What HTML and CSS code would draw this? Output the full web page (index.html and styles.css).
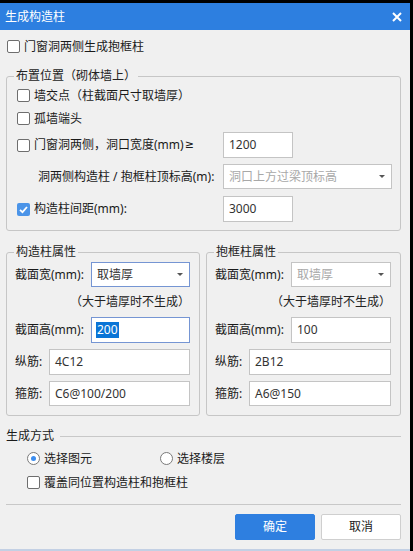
FILE: index.html
```html
<!DOCTYPE html>
<html lang="zh-CN">
<head>
    <meta charset="UTF-8">
    <meta name="viewport" content="width=device-width, initial-scale=1.0">
    <title>生成构造柱</title>
    <link rel="stylesheet" href="styles.css">
</head>
<body>

<div class="dialog">
    <div class="titlebar">
        <span class="title">生成构造柱</span>
        <svg class="close" width="10" height="10" viewBox="0 0 10 10">
            <path d="M1 1 L9 9 M9 1 L1 9" stroke="#fff" stroke-width="2" fill="none"/>
        </svg>
    </div>

    <div class="content">
        <div class="check top-check"><span class="box"></span>门窗洞两侧生成抱框柱</div>

        <!-- 布置位置 -->
        <fieldset class="group place">
            <legend>布置位置（砌体墙上）</legend>
            <div class="prow ra"><div class="check"><span class="box"></span>墙交点（柱截面尺寸取墙厚）</div></div>
            <div class="prow rb"><div class="check"><span class="box"></span>孤墙端头</div></div>
            <div class="prow rc">
                <div class="check"><span class="box"></span>门窗洞两侧，洞口宽度(mm)<span class="ge">≥</span></div>
                <div class="field short">1200</div>
            </div>
            <div class="prow rd">
                <div class="indent">洞两侧构造柱 / 抱框柱顶标高(m):</div>
                <div class="field select disabled">洞口上方过梁顶标高<span class="arrow"></span></div>
            </div>
            <div class="prow re">
                <div class="check"><span class="box checked"></span>构造柱间距(mm):</div>
                <div class="field short">3000</div>
            </div>
        </fieldset>

        <div class="columns">
            <fieldset class="group prop left">
                <legend>构造柱属性</legend>
                <div class="frow r1"><span class="lbl">截面宽(mm):</span><div class="field select focus">取墙厚<span class="arrow"></span></div></div>
                <div class="note">（大于墙厚时不生成）</div>
                <div class="frow r2"><span class="lbl">截面高(mm):</span><div class="field focus"><span class="sel">200</span></div></div>
                <div class="frow r3"><span class="lbl narrow">纵筋:</span><div class="field">4C12</div></div>
                <div class="frow r4"><span class="lbl narrow">箍筋:</span><div class="field">C6@100/200</div></div>
            </fieldset>
            <fieldset class="group prop right">
                <legend>抱框柱属性</legend>
                <div class="frow r1"><span class="lbl">截面宽(mm):</span><div class="field select disabled">取墙厚<span class="arrow"></span></div></div>
                <div class="note">（大于墙厚时不生成）</div>
                <div class="frow r2"><span class="lbl">截面高(mm):</span><div class="field">100</div></div>
                <div class="frow r3"><span class="lbl narrow">纵筋:</span><div class="field">2B12</div></div>
                <div class="frow r4"><span class="lbl narrow">箍筋:</span><div class="field">A6@150</div></div>
            </fieldset>
        </div>

        <div class="section-head"><span>生成方式</span><div class="line"></div></div>
        <div class="radios">
            <div class="radio first"><span class="dot checked"></span>选择图元</div>
            <div class="radio"><span class="dot"></span>选择楼层</div>
        </div>
        <div class="check cover"><span class="box"></span>覆盖同位置构造柱和抱框柱</div>

        <div class="divider"></div>

        <div class="buttons">
            <div class="btn primary">确定</div>
            <div class="btn">取消</div>
        </div>
    </div>
</div>

</body>
</html>
```

FILE: styles.css
```css
body {
    margin: 0;
    background: #000;
    font-family: "Noto Sans", "Noto Sans CJK SC", sans-serif;
    font-size: 12px;
    color: #1a1a1a;
}
.dialog {
    width: 410px;
    height: 546px;
    margin-top: 3px;
    background: #f0f0f0;
    border-bottom: 2px solid #c3d0e4;
    overflow: hidden;
}
.titlebar {
    height: 27px;
    background: #2d7fe0;
    display: flex;
    align-items: center;
    justify-content: space-between;
    padding: 0 8px 0 5px;
}
.title {
    color: #fff;
    font-size: 12px;
    line-height: 16px;
}
.close {
    display: block;
}
.content {
    padding: 0 9px 0 6px;
}

/* checkboxes / radios */
.check {
    display: flex;
    align-items: center;
    height: 19px;
    line-height: 16px;
    white-space: nowrap;
}
.box {
    width: 11px;
    height: 11px;
    border: 1px solid #6e6e6e;
    border-radius: 2px;
    background: #fff;
    margin-right: 4px;
    flex: none;
}
.box.checked {
    width: 13px;
    height: 13px;
    border: none;
    background: #4b94e8 url("data:image/svg+xml;utf8,<svg xmlns='http://www.w3.org/2000/svg' width='13' height='13'><path d='M3 6.8 L5.5 9.2 L10 4' stroke='white' stroke-width='1.8' fill='none'/></svg>") no-repeat center;
}
.top-check {
    margin-top: 7px;
    padding-left: 1px;
}
.ge {
    font-family: "DejaVu Sans", sans-serif;
    font-size: 11px;
    margin-left: 1px;
}

/* group boxes */
.group {
    margin: 0;
    padding: 0;
    border: 1px solid #c6c6c6;
    border-radius: 3px;
    min-width: 0;
}
.group legend {
    margin-left: 7px;
    padding: 0 2px;
    line-height: 16px;
    color: #222;
}
.place {
    margin-top: 12px;
    padding-bottom: 8px;
}
.prow {
    display: grid;
    grid-template-columns: 206px 1fr;
    align-items: center;
    padding: 0 8px 0 10px;
}
.prow.ra { margin-top: 2px; height: 19px; }
.prow.rb { margin-top: 4px; height: 19px; }
.prow.rc { margin-top: 4px; height: 26px; }
.prow.rd { margin-top: 6px; height: 25px; }
.prow.re { margin-top: 7px; height: 26px; }
.indent {
    padding-left: 21px;
    white-space: nowrap;
    line-height: 16px;
}

/* fields */
.field {
    position: relative;
    box-sizing: border-box;
    height: 26px;
    border: 1px solid #c4c4c4;
    background: #fff;
    padding-left: 5px;
    display: flex;
    align-items: center;
    color: #333;
    line-height: 16px;
    white-space: nowrap;
}
.field.short {
    width: 70px;
}
.field.select {
    height: 25px;
}
.field.focus {
    border-color: #7595d3;
}
.field.disabled {
    color: #a8a8a8;
}
.arrow {
    position: absolute;
    right: 6px;
    top: 10px;
    width: 0;
    height: 0;
    border-left: 3px solid transparent;
    border-right: 3px solid transparent;
    border-top: 3px solid #555;
}
.sel {
    background: #0a74d6;
    color: #fff;
    padding: 0 1px;
    margin-left: -1px;
}

.columns {
    display: flex;
    gap: 6px;
    margin-top: 13px;
}
.prop {
    padding: 0 9px 9px 8px;
}
.prop legend {
    margin-left: -1px;
}
.prop.left { width: 194px; box-sizing: border-box; }
.prop.right { width: 195px; box-sizing: border-box; }
.frow {
    display: flex;
    align-items: center;
}
.frow .field {
    flex: 1;
}
.lbl {
    width: 76px;
    flex: none;
    white-space: nowrap;
    line-height: 16px;
}
.lbl.narrow {
    width: 34px;
}
.frow.r1 { margin-top: 2px; height: 25px; }
.frow.r2 { height: 26px; }
.frow.r3 { margin-top: 6px; height: 26px; }
.frow.r4 { margin-top: 6px; height: 25px; }
.frow.r4 .field { height: 25px; }
.note {
    height: 30px;
    line-height: 30px;
    text-align: right;
    white-space: nowrap;
    color: #222;
}

/* generation mode */
.section-head {
    display: flex;
    align-items: center;
    margin-top: 11px;
    height: 18px;
    line-height: 16px;
}
.section-head .line {
    flex: 1;
    border-top: 1px solid #c8c8c8;
    margin-left: 6px;
}
.radios {
    display: flex;
    margin-top: 4px;
    padding-left: 21px;
    height: 19px;
}
.radio {
    display: flex;
    align-items: center;
    line-height: 16px;
}
.radio.first {
    width: 133px;
}
.dot {
    box-sizing: border-box;
    width: 13px;
    height: 13px;
    border: 1px solid #7a7a7a;
    border-radius: 50%;
    background: #fff;
    margin-right: 4px;
    display: flex;
    align-items: center;
    justify-content: center;
}
.dot.checked::after {
    content: "";
    width: 5px;
    height: 5px;
    border-radius: 50%;
    background: #3d8ef0;
}
.cover {
    margin-top: 5px;
    padding-left: 21px;
}
.divider {
    margin-top: 12px;
    border-top: 1px solid #c8c8c8;
}
.buttons {
    display: flex;
    justify-content: flex-end;
    gap: 6px;
    margin-top: 9px;
}
.btn {
    box-sizing: border-box;
    width: 80px;
    height: 26px;
    border: 1px solid #cfcfcf;
    border-radius: 2px;
    background: #fff;
    display: flex;
    align-items: center;
    justify-content: center;
    line-height: 16px;
    color: #1a1a1a;
}
.btn.primary {
    background: #2e7fe0;
    border-color: #2e7fe0;
    color: #fff;
}
```
